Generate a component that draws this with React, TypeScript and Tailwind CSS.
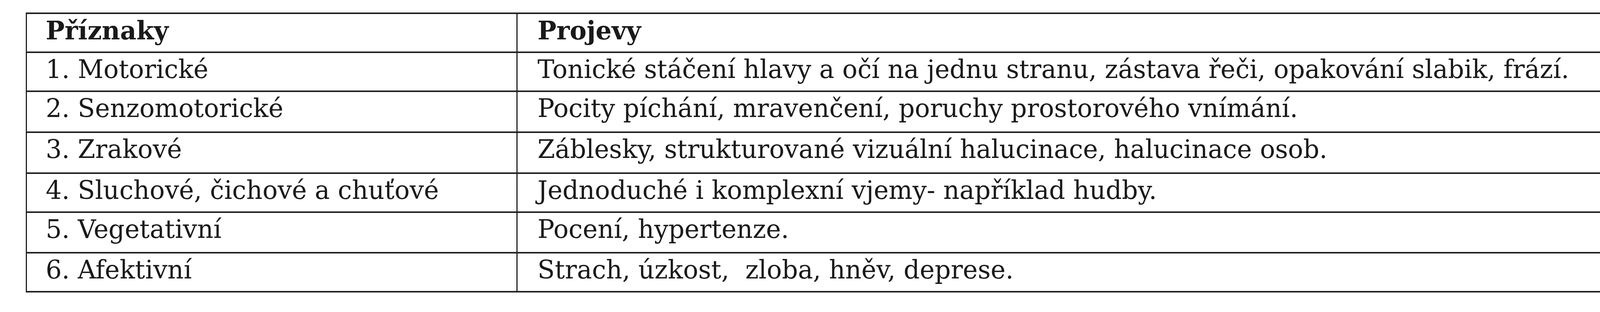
const rows: { a: string; b: string; h: number }[] = [
  { a: "1. Motorické", b: "Tonické stáčení hlavy a očí na jednu stranu, zástava řeči, opakování slabik, frází.", h: 96 },
  { a: "2. Senzomotorické", b: "Pocity píchání, mravenčení, poruchy prostorového vnímání.", h: 101 },
  { a: "3. Zrakové", b: "Záblesky, strukturované vizuální halucinace, halucinace osob.", h: 101 },
  { a: "4. Sluchové, čichové a chuťové", b: "Jednoduché i komplexní vjemy- například hudby.", h: 96 },
  { a: "5. Vegetativní", b: "Pocení, hypertenze.", h: 100 },
  { a: "6. Afektivní", b: "Strach, úzkost,  zloba, hněv, deprese.", h: 96 },
];

function Row({ a, b, h, bold }: { a: string; b: string; h: number; bold?: boolean }) {
  return (
    <div
      className={`flex ${bold ? "font-bold" : "border-t-[4px] border-[#222]"}`}
      style={{ height: h + (bold ? 0 : 4) }}
    >
      <div className="w-[1256px] shrink-0 border-r-[3px] border-[#222] pl-[48px] pt-[10px] whitespace-pre">{a}</div>
      <div className="flex-1 pl-[51px] pt-[10px] whitespace-pre">{b}</div>
    </div>
  );
}

export default function App() {
  return (
    <div className="w-full h-[800px] overflow-hidden bg-white pt-[32px] pl-[66px] text-[#1a1a1a] font-['DejaVu_Serif',serif] text-[64.5px] leading-[64.5px]">
      <div className="w-[4280px] border-x-[3px] border-y-[4px] border-[#222]">
        <Row a="Příznaky" b="Projevy" h={96} bold />
        {rows.map((r) => (
          <Row key={r.a} a={r.a} b={r.b} h={r.h} />
        ))}
      </div>
    </div>
  );
}
